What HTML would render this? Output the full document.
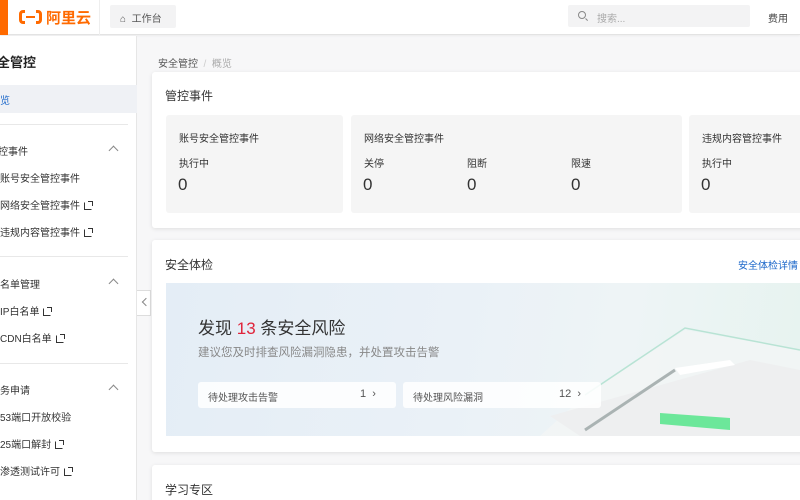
<!DOCTYPE html>
<html><head><meta charset="utf-8"><style>
*{margin:0;padding:0;box-sizing:border-box}
html,body{width:800px;height:500px;overflow:hidden}
body{background:#f7f7f8;font-family:"Liberation Sans","Noto Sans CJK SC",sans-serif;color:#333;position:relative}
.a{position:absolute}
.hdr{left:0;top:0;width:800px;height:35px;background:#fff;border-bottom:1px solid #e3e3e3;box-shadow:0 1px 2px rgba(0,0,0,.05)}
.side{left:0;top:36px;width:137px;height:464px;background:#fff;border-right:1px solid #e6e6e6}
.t{font-size:10px;color:#333;white-space:nowrap}
.card{background:#fff;border-radius:3px;box-shadow:0 1px 4px rgba(0,0,0,.1)}
.box{background:#f5f5f5;border-radius:3px}
.ext{display:inline-block;width:8px;height:8px;border:1.5px solid #333;border-top-color:transparent;border-right-color:transparent;margin-left:4px;position:relative;vertical-align:-1px}
.ext:after{content:"";position:absolute;right:-2px;top:-2px;width:4px;height:4px;border-top:1.5px solid #333;border-right:1.5px solid #333}
.chev{width:7px;height:7px;border-left:1.2px solid #888;border-top:1.2px solid #888;transform:rotate(45deg)}
.sep{height:1px;background:#e8e8e8}
.btn{background:rgba(255,255,255,.85);border-radius:3px;height:26px}
</style></head><body>
<div class="a hdr"></div>
<div class="a" style="left:0;top:0;width:8px;height:35px;background:#ff6a00"></div>
<div class="a" style="left:19px;top:10px;width:23px;height:14px;border:3px solid #ff6a00;border-radius:4px"></div>
<div class="a" style="left:25px;top:7px;width:11px;height:20px;background:#fff"></div>
<div class="a" style="left:26px;top:15.5px;width:9px;height:2.5px;background:#ff6a00"></div>
<div class="a" style="left:46px;top:7px;font-size:15px;font-weight:bold;color:#ff6a00">阿里云</div>
<div class="a" style="left:99px;top:0;width:1px;height:35px;background:#eee"></div>
<div class="a" style="left:110px;top:5px;width:66px;height:23px;background:#f3f3f4;border-radius:2px"></div>
<div class="a t" style="left:120px;top:10px;font-size:10px;color:#555">⌂ &nbsp;工作台</div>
<div class="a" style="left:568px;top:5px;width:182px;height:22px;background:#f3f3f4;border-radius:2px"></div>
<div class="a" style="left:578px;top:11px;width:8px;height:8px;border:1.3px solid #888;border-radius:50%"></div>
<div class="a" style="left:585px;top:19px;width:3px;height:1.3px;background:#888;transform:rotate(45deg)"></div>
<div class="a t" style="left:597px;top:10px;color:#aaa">搜索...</div>
<div class="a t" style="left:768px;top:10px;color:#444">费用</div>

<div class="a side"></div>
<div class="a" style="left:-3px;top:52px;font-size:13px;font-weight:bold;color:#222">全管控</div>
<div class="a" style="left:0;top:85px;width:137px;height:28px;background:#eff1f5"></div>
<div class="a t" style="left:0;top:92px;color:#1a66c9">览</div>
<div class="a sep" style="left:0;top:124px;width:128px"></div>
<div class="a t" style="left:-2px;top:143px">控事件</div>
<div class="a chev" style="left:110px;top:147px"></div>
<div class="a t" style="left:0;top:170px">账号安全管控事件</div>
<div class="a t" style="left:0;top:197px">网络安全管控事件<span class="ext"></span></div>
<div class="a t" style="left:0;top:224px">违规内容管控事件<span class="ext"></span></div>
<div class="a sep" style="left:0;top:256px;width:128px"></div>
<div class="a t" style="left:0;top:276px">名单管理</div>
<div class="a chev" style="left:110px;top:280px"></div>
<div class="a t" style="left:0;top:303px">IP白名单<span class="ext"></span></div>
<div class="a t" style="left:0;top:330px">CDN白名单<span class="ext"></span></div>
<div class="a sep" style="left:0;top:363px;width:128px"></div>
<div class="a t" style="left:0;top:382px">务申请</div>
<div class="a chev" style="left:110px;top:386px"></div>
<div class="a t" style="left:0;top:409px">53端口开放校验</div>
<div class="a t" style="left:0;top:436px">25端口解封<span class="ext"></span></div>
<div class="a t" style="left:0;top:463px">渗透测试许可<span class="ext"></span></div>
<div class="a" style="left:137px;top:290px;width:14px;height:26px;background:#fff;border:1px solid #ddd;border-left:none"></div>
<div class="a" style="left:143px;top:299px;width:6px;height:6px;border-left:1.2px solid #888;border-bottom:1.2px solid #888;transform:rotate(45deg)"></div>

<div class="a t" style="left:158px;top:55px;color:#555">安全管控 <span style="color:#ccc">&nbsp;/&nbsp;</span> <span style="color:#aaa">概览</span></div>
<div class="a card" style="left:152px;top:72px;width:660px;height:156px"></div>
<div class="a" style="left:165px;top:87px;font-size:12px;color:#333">管控事件</div>
<div class="a box" style="left:166px;top:115px;width:177px;height:98px"></div>
<div class="a box" style="left:351px;top:115px;width:331px;height:98px"></div>
<div class="a box" style="left:689px;top:115px;width:120px;height:98px"></div>
<div class="a t" style="left:179px;top:130px">账号安全管控事件</div>
<div class="a t" style="left:364px;top:130px">网络安全管控事件</div>
<div class="a t" style="left:702px;top:130px">违规内容管控事件</div>
<div class="a t" style="left:179px;top:155px">执行中</div>
<div class="a t" style="left:364px;top:155px">关停</div>
<div class="a t" style="left:467px;top:155px">阻断</div>
<div class="a t" style="left:571px;top:155px">限速</div>
<div class="a t" style="left:702px;top:155px">执行中</div>
<div class="a" style="left:178px;top:175px;font-size:17px;color:#333">0</div>
<div class="a" style="left:363px;top:175px;font-size:17px;color:#333">0</div>
<div class="a" style="left:467px;top:175px;font-size:17px;color:#333">0</div>
<div class="a" style="left:571px;top:175px;font-size:17px;color:#333">0</div>
<div class="a" style="left:701px;top:175px;font-size:17px;color:#333">0</div>

<div class="a card" style="left:152px;top:240px;width:660px;height:212px"></div>
<div class="a" style="left:165px;top:256px;font-size:12px">安全体检</div>
<div class="a t" style="left:738px;top:257px;color:#1a66c9">安全体检详情</div>
<div class="a" style="left:166px;top:283px;width:640px;height:153px;background:linear-gradient(100deg,#e4edf6 0%,#eaf1f7 45%,#eef4f6 70%,#e6f3ef 100%)"></div>
<svg class="a" style="left:530px;top:320px" width="270" height="116">
<polygon points="10,116 55,75 155,10 270,30 270,116" fill="#f2f5f5" opacity=".9"/>
<polyline points="55,75 155,8 270,30" fill="none" stroke="#b8e3d4" stroke-width="1.5"/>
<polygon points="20,96 50,116 270,116 270,50 220,40" fill="#eeeff0"/>
<line x1="55" y1="110" x2="145" y2="50" stroke="#aab3b3" stroke-width="3"/>
<polygon points="145,48 200,40 205,45 150,55" fill="#fff"/>
<polygon points="130,93 200,98 200,110 130,104" fill="#6ce79a"/>
</svg>
<div class="a" style="left:198px;top:314px;font-size:17px;color:#333">发现 <span style="color:#e0243b">13</span> 条安全风险</div>
<div class="a" style="left:198px;top:344px;font-size:11.5px;color:#888">建议您及时排查风险漏洞隐患，并处置攻击告警</div>
<div class="a btn" style="left:198px;top:382px;width:198px"></div>
<div class="a t" style="left:208px;top:389px;color:#555">待处理攻击告警</div>
<div class="a t" style="left:360px;top:388px;font-size:11px;color:#555">1 &nbsp;›</div>
<div class="a btn" style="left:403px;top:382px;width:198px"></div>
<div class="a t" style="left:413px;top:389px;color:#555">待处理风险漏洞</div>
<div class="a t" style="left:559px;top:388px;font-size:11px;color:#555">12 &nbsp;›</div>

<div class="a card" style="left:152px;top:465px;width:660px;height:60px"></div>
<div class="a" style="left:165px;top:481px;font-size:12px">学习专区</div>
</body></html>
